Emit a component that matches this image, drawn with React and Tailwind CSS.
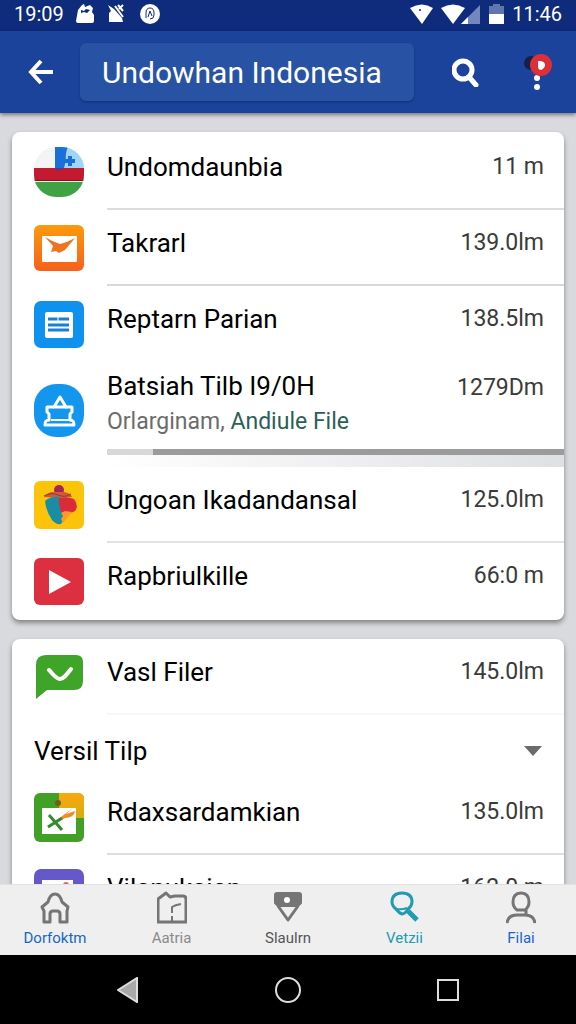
import { useState } from 'react';

function FlagIcon() {
  return (
    <svg viewBox="0 0 50 50" className="w-full" aria-hidden="true">
      <clipPath id="flag">
        <rect width="50" height="50" rx="22" />
      </clipPath>
      <g clipPath="url(#flag)">
        <rect width="50" height="50" fill="#f3f4f6" />
        <rect x="21" width="29" height="22" fill="#9fd6f7" />
        <path d="M21 0h13q-3 6-2 13l-2 8h-9z" fill="#1a70d8" />
        <path d="M36 9v10M31 14h10" stroke="#1a70d8" strokeWidth="4" />
        <rect y="21" width="50" height="13" fill="#c31a30" />
        <path d="M21 21h9l-6 3z" fill="#4b3a9a" />
        <rect y="33" width="50" height="1" fill="#7a1420" />
        <rect y="34" width="50" height="1" fill="#e6efe4" />
        <rect y="35" width="50" height="15" fill="#3fa345" />
      </g>
    </svg>
  );
}

function MailIcon() {
  return (
    <svg viewBox="0 0 50 46" className="w-full" aria-hidden="true">
      <defs>
        <linearGradient id="mail" x1="0" y1="0" x2="0" y2="1">
          <stop offset="0" stopColor="#fb9a0c" />
          <stop offset="1" stopColor="#f6601c" />
        </linearGradient>
      </defs>
      <rect width="50" height="46" rx="6" fill="url(#mail)" />
      <rect x="8" y="11" width="35" height="26" rx="1" fill="#fff" />
      <path d="M11 12q8 5 15 7 8-2 15-6L31 25l-4 2-2 1-3-2-5 1 2-6z" fill="#ee7420" />
    </svg>
  );
}

function DocIcon() {
  return (
    <svg viewBox="0 0 50 47" className="w-full" aria-hidden="true">
      <rect width="50" height="47" rx="7" fill="#0f92ee" />
      <rect x="11" y="11" width="28" height="26" rx="2" fill="#fff" />
      <path d="M14 18h21M14 24h21M14 29h21" stroke="#187fd6" strokeWidth="3" />
      <path d="M24 15v5" stroke="#fff" strokeWidth="1" />
    </svg>
  );
}

function ArchiveIcon() {
  return (
    <svg viewBox="0 0 50 53" className="w-full" aria-hidden="true">
      <rect width="50" height="53" rx="22" fill="#1296ee" />
      <g fill="none" stroke="#fff" strokeWidth="3" strokeLinejoin="round">
        <path d="M26 13l-6 10h12z" />
        <path d="M20 23h-7v5l2 2v6c-3 0-4 1-4 5h29c0-4-1-5-4-5v-6l2-2v-5h-7" />
        <path d="M17 36h18" strokeWidth="2" />
      </g>
    </svg>
  );
}

function MascotIcon() {
  return (
    <svg viewBox="0 0 50 48" className="w-full" aria-hidden="true">
      <rect width="50" height="48" rx="6" fill="#fbc40b" />
      <circle cx="25" cy="9" r="5" fill="#a3245c" />
      <path d="M10 16q4-5 9-5h11q7 1 8 5l-14 1z" fill="#e0562c" />
      <path d="M10 15q7-4 14-1t13-1" fill="none" stroke="#5c4a63" strokeWidth="1" />
      <path d="M11 20q6-5 15-4l3 15q2 7-2 12-5 1-9-4-6-9-7-19z" fill="#168fa5" />
      <path d="M25 17q8-2 15 1 5 7 1 12l-8 4-6-3-2-7z" fill="#da2b3b" />
      <path d="M31 30l7 1-9 11-2-4 2-3-2-3z" fill="#fb9a24" />
    </svg>
  );
}

function PlayIcon() {
  return (
    <svg viewBox="0 0 50 47" className="w-full" aria-hidden="true">
      <rect width="50" height="47" rx="6" fill="#dc3041" />
      <path d="M15 12l22 12-22 12z" fill="#fff" />
    </svg>
  );
}

function ChatIcon() {
  return (
    <svg viewBox="0 0 50 46" className="w-full" aria-hidden="true">
      <path d="M12 1h30q7 0 7 7v19q0 9-9 9H13L2 45V11Q2 1 12 1z" fill="#3fa528" />
      <path d="M15 16c4 4 7 9 11 9s7-5 11-10" fill="none" stroke="#fff" strokeWidth="4" strokeLinecap="round" />
    </svg>
  );
}

function SheetIcon() {
  return (
    <svg viewBox="0 0 50 49" className="w-full" aria-hidden="true">
      <defs>
        <linearGradient id="sheet" x1="0" y1="0" x2="0" y2="1">
          <stop offset="0" stopColor="#fba70d" />
          <stop offset="1" stopColor="#d5ad15" />
        </linearGradient>
      </defs>
      <rect width="50" height="49" rx="6" fill="#43a026" />
      <path d="M25 0h19q6 0 6 6v19H25z" fill="url(#sheet)" />
      <rect x="8" y="15" width="34" height="26" fill="#fff" />
      <circle cx="24" cy="10" r="3" fill="#6f6112" />
      <path d="M40 14L27 24l-3 5 7-4q9 0 10-7l-9 3z" fill="#f58a22" />
      <path d="M15 22l13 15M28 25L14 34" stroke="#358a2b" strokeWidth="3" />
    </svg>
  );
}

function PhotoIcon() {
  return (
    <svg viewBox="0 0 50 48" className="w-full" aria-hidden="true">
      <rect width="50" height="48" rx="7" fill="#6558c8" />
      <rect x="8" y="11" width="31" height="26" fill="#fff" />
      <circle cx="32" cy="16" r="3" fill="#e4695c" />
    </svg>
  );
}

const files = [
  { name: 'Undomdaunbia', size: '11 m', Icon: FlagIcon },
  { name: 'Takrarl', size: '139.0lm', Icon: MailIcon },
  { name: 'Reptarn Parian', size: '138.5lm', Icon: DocIcon },
];

const moreFiles = [
  { name: 'Ungoan Ikadandansal', size: '125.0lm', Icon: MascotIcon },
  { name: 'Rapbriulkille', size: '66:0 m', Icon: PlayIcon },
];

const versions = [
  { name: 'Rdaxsardamkian', size: '135.0lm', Icon: SheetIcon },
  { name: 'Vilanukaian', size: '162.0 m', Icon: PhotoIcon },
];

function FileRow({ file, border = 'border-transparent' }) {
  const { name, size, Icon } = file;
  return (
    <li className="flex h-[76px] pl-[22px]">
      <div className="flex w-[50px] items-center">
        <Icon />
      </div>
      <div className={`ml-[23px] flex flex-1 items-center justify-between border-b-2 pr-5 pb-2 ${border}`}>
        <span className="text-[26px] leading-8 text-black">{name}</span>
        <span className="text-[23px] leading-8 text-[#3a3a3a]">{size}</span>
      </div>
    </li>
  );
}

function StatusBar() {
  return (
    <div className="flex h-[31px] shrink-0 items-center justify-between bg-[#0e2b7c] px-3.5 pb-1 text-white">
      <div className="flex items-center gap-3">
        <span className="text-[20px] leading-6">19:09</span>
        <svg width="18" height="20" viewBox="0 0 18 20" fill="#fff" aria-hidden="true">
          <path d="M2 6l4-5 2-1 1 3 5-2 3 3-1 4 2 3v6q0 2-2 2H2q-2 0-2-2z" />
          <path d="M5 6l3 1 2-2 4 1-3 3-3-1-3 1z" fill="#0e2b7c" />
        </svg>
        <svg width="20" height="20" viewBox="0 0 20 20" aria-hidden="true">
          <path d="M2 1l6 4 8 9 1 4H3V9l2-2z" fill="#fff" />
          <path d="M9 2l8 11M12 1l5 6M17 1l-4 4" stroke="#fff" strokeWidth="2" />
        </svg>
        <svg width="20" height="20" viewBox="0 0 20 20" className="ml-0.5" aria-hidden="true">
          <circle cx="10" cy="10" r="10" fill="#fff" />
          <path d="M6 14V9q0-5 4-5t4 5v2q0 4-4 4M8 13l2-6 2 5" fill="none" stroke="#0e2b7c" strokeWidth="1" />
        </svg>
      </div>
      <div className="flex items-center gap-2">
        <svg width="23" height="20" viewBox="0 0 23 20" aria-hidden="true">
          <path d="M0 4Q12-3 23 4L12 20z" fill="#fff" />
          <circle cx="10" cy="6" r="1" fill="#0e2b7c" />
        </svg>
        <svg width="40" height="20" viewBox="0 0 40 20" aria-hidden="true">
          <path d="M20 20L39 1v19z" fill="#7287bd" />
          <path d="M20 20l7-7v7z" fill="#fff" />
          <path d="M0 4Q12-3 24 4L12 20z" fill="#fff" />
        </svg>
        <svg width="15" height="20" viewBox="0 0 15 20" aria-hidden="true">
          <path d="M4 0h7v2h4v9H0V2h4z" fill="#5f76b0" />
          <path d="M0 10h15v10H0z" fill="#fff" />
        </svg>
        <span className="text-[20px] leading-6">11:46</span>
      </div>
    </div>
  );
}

function Header() {
  return (
    <header className="relative z-10 flex h-[82px] shrink-0 items-center bg-[#1b439c] pr-6 pl-7 shadow-[0_2px_4px_rgba(0,0,0,0.45)]">
      <button type="button" aria-label="Back">
        <svg width="26" height="26" viewBox="0 0 26 26" fill="none" stroke="#fff" strokeWidth="4" aria-hidden="true">
          <path d="M13 2L3 13l10 11M3 13h22" />
        </svg>
      </button>
      <input
        type="text"
        aria-label="Search files"
        defaultValue="Undowhan Indonesia"
        className="ml-[26px] h-[58px] min-w-0 flex-1 rounded-md bg-[#2853a4] pr-2 pl-[22px] text-[30px] text-white shadow-[0_1px_2px_rgba(0,0,0,0.3)] outline-none"
      />
      <button type="button" aria-label="Search" className="ml-[38px]">
        <svg width="27" height="29" viewBox="0 0 27 29" fill="none" stroke="#fff" strokeWidth="5" aria-hidden="true">
          <circle cx="11" cy="12" r="9" />
          <path d="M17 19l7 8" strokeLinecap="round" />
        </svg>
      </button>
      <button type="button" aria-label="More options" className="ml-[45px]">
        <svg width="28" height="38" viewBox="0 0 28 38" aria-hidden="true">
          <circle cx="7" cy="10" r="7" fill="#14204a" />
          <circle cx="13" cy="25" r="3" fill="#fff" />
          <circle cx="17" cy="12" r="11" fill="#dc3038" />
          <path d="M14 8h3q4 1 4 4t-4 5q-3 0-3-4z" fill="#fff" />
          <circle cx="13" cy="34" r="3" fill="#fff" />
        </svg>
      </button>
    </header>
  );
}

const tabs = [
  {
    label: 'Dorfoktm',
    color: 'text-[#1668c4]',
    icon: <path d="M2 16l6-5q2-8 7-8t7 8l6 5-1 4v11h-7v-8q0-3-3-3h-4q-3 0-3 3v8H4V20z" />,
  },
  {
    label: 'Aatria',
    color: 'text-[#8a8a8a]',
    icon: (
      <>
        <path d="M1 8l8-6 4 4 5-1h8q3 0 3 3v23H1z" />
        <path d="M15 30v-5M15 22v-6q3-2 9-3" strokeWidth="2" />
      </>
    ),
  },
  {
    label: 'Slaulrn',
    color: 'text-[#555]',
    icon: (
      <>
        <path d="M2 4q0-2 2-2h22q2 0 2 2v8l-3 3H5l-3-3z" fill="#757575" strokeWidth="2" />
        <path d="M5 15l10 14 10-14" />
        <circle cx="14" cy="9" r="2" fill="#fff" stroke="#fff" strokeWidth="2" />
      </>
    ),
  },
  {
    label: 'Vetzii',
    color: 'text-[#219bb0]',
    icon: (
      <g stroke="#219bb0">
        <path d="M12 2q10 0 10 9 0 4-4 7-3 5-6 5-3-1-6-5-4-3-4-7 0-9 10-9z" strokeWidth="3" />
        <path d="M6 18q6 1 11-1" strokeWidth="2" />
        <path d="M18 20l9 9" strokeWidth="5" />
      </g>
    ),
  },
  {
    label: 'Filai',
    color: 'text-[#1767d2]',
    icon: (
      <>
        <path d="M7 11q0-9 8-9t8 9q0 5-4 8h-8q-4-3-4-8zM20 18v5" />
        <path d="M1 32q1-8 10-8h8q9 0 10 8" />
      </>
    ),
  },
];

export default function App() {
  const [open, setOpen] = useState(true);

  return (
    <div className="flex h-dvh flex-col overflow-hidden bg-[#d9dadd] font-[Roboto,'Liberation_Sans',sans-serif]">
      <StatusBar />
      <Header />

      <main className="min-h-0 flex-1 overflow-hidden px-3 pt-[19px]">
        <section className="rounded-lg bg-white shadow-[0_3px_5px_rgba(0,0,0,0.4)]">
          <ul className="pt-0.5 pb-px">
            <FileRow file={files[0]} border="border-[#dcdcdc]" />
            <FileRow file={files[1]} border="border-[#d8d8d8]" />
            <FileRow file={files[2]} />
            <li className="flex h-[105px] pl-[22px]">
              <div className="w-[50px] pt-[22px]">
                <ArchiveIcon />
              </div>
              <div className="ml-[23px] flex flex-1 flex-col justify-between pt-2">
                <div className="flex justify-between pr-5">
                  <div>
                    <p className="text-[26px] leading-8 text-black">Batsiah Tilb I9/0H</p>
                    <p className="mt-1 text-[23px] leading-8 text-[#6c6c6c]">
                      Orlarginam, <a href="#file" className="text-[#2c5f58]">Andiule File</a>
                    </p>
                  </div>
                  <span className="pt-0.5 text-[23px] leading-8 text-[#3a3a3a]">1279Dm</span>
                </div>
                <div>
                  <div className="flex h-1.5 rounded-l-full bg-[#9b9b9b]">
                    <div className="w-[10%] rounded-l-full bg-[#d8d8d8]" />
                  </div>
                  <div className="h-3 bg-linear-to-r from-white to-[#dfe0e3]" />
                </div>
              </div>
            </li>
            <FileRow file={moreFiles[0]} border="border-[#e2e2e2]" />
            <FileRow file={moreFiles[1]} />
          </ul>
        </section>

        <section className="mt-[19px] rounded-lg bg-white shadow-[0_3px_5px_rgba(0,0,0,0.4)]">
          <ul>
            <FileRow file={{ name: 'Vasl Filer', size: '145.0lm', Icon: ChatIcon }} border="border-[#f7f7f7]" />
          </ul>
          <button
            type="button"
            aria-expanded={open}
            onClick={() => setOpen(!open)}
            className="flex h-16 w-full items-center justify-between pt-2 pr-[22px] pl-[22px] text-[26px] text-black"
          >
            Versil Tilp
            <svg width="18" height="10" viewBox="0 0 18 10" aria-hidden="true">
              <path d="M0 0h18L9 10z" fill="#6b6b6b" />
            </svg>
          </button>
          {open && (
            <ul>
              {versions.map((v) => (
                <FileRow key={v.name} file={v} border="border-[#dedede]" />
              ))}
            </ul>
          )}
        </section>
      </main>

      <nav className="flex h-[71px] shrink-0 justify-between border-t border-[#e0e0e0] bg-[#efefef]">
        {tabs.map((t) => (
          <a key={t.label} href={`#${t.label}`} className={`flex w-[110px] flex-col items-center pt-1.5 ${t.color}`}>
            <svg width="30" height="33" viewBox="0 0 30 33" fill="none" stroke="#757575" strokeWidth="3" strokeLinejoin="round" aria-hidden="true">
              {t.icon}
            </svg>
            <span className="mt-1 text-[15px] leading-5">{t.label}</span>
          </a>
        ))}
      </nav>

      <div className="grid h-[69px] shrink-0 grid-cols-3 items-center justify-items-center bg-black px-12">
        <button type="button" aria-label="System back">
          <svg width="22" height="26" viewBox="0 0 22 26" aria-hidden="true">
            <path d="M1 13L20 1v24z" fill="#a8a8a8" stroke="#ddd" strokeWidth="2" />
          </svg>
        </button>
        <button type="button" aria-label="System home">
          <svg width="28" height="28" viewBox="0 0 28 28" fill="none" stroke="#ddd" strokeWidth="2" aria-hidden="true">
            <circle cx="14" cy="14" r="12" />
          </svg>
        </button>
        <button type="button" aria-label="Recent apps">
          <svg width="24" height="24" viewBox="0 0 24 24" fill="none" stroke="#ddd" strokeWidth="2" aria-hidden="true">
            <rect x="2" y="2" width="20" height="20" />
          </svg>
        </button>
      </div>
    </div>
  );
}
